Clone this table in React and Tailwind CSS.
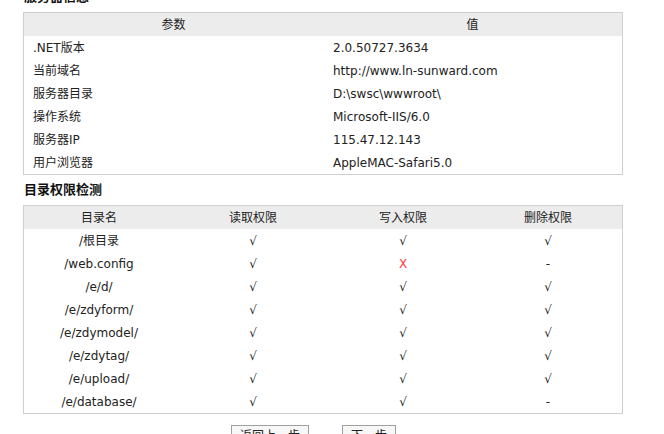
import React from "react";

const info = [
  [".NET版本", "2.0.50727.3634"],
  ["当前域名", "http://www.ln-sunward.com"],
  ["服务器目录", "D:\\swsc\\wwwroot\\"],
  ["操作系统", "Microsoft-IIS/6.0"],
  ["服务器IP", "115.47.12.143"],
  ["用户浏览器", "AppleMAC-Safari5.0"],
];

const dirs = [
  ["/根目录", "√", "√", "√"],
  ["/web.config", "√", "X", "-"],
  ["/e/d/", "√", "√", "√"],
  ["/e/zdyform/", "√", "√", "√"],
  ["/e/zdymodel/", "√", "√", "√"],
  ["/e/zdytag/", "√", "√", "√"],
  ["/e/upload/", "√", "√", "√"],
  ["/e/database/", "√", "√", "-"],
];

function Cell({ v }) {
  if (v === "X") return <span className="text-[#ff3b3b]">X</span>;
  return <span>{v}</span>;
}

export default function App() {
  return (
    <div
      className="flex flex-col w-[664px] h-[434px] overflow-hidden bg-white text-[12px] text-[#222]"
      style={{ fontFamily: '"DejaVu Sans", "Noto Sans CJK SC", sans-serif' }}
    >
      <div className="shrink-0 mt-[-18px] ml-[24px] h-[30px] flex items-center font-bold text-[13px] text-[#111]">
        服务器信息
      </div>
      <div className="shrink-0 ml-[23px] w-[600px] border border-[#cfcfcf]">
        <div className="grid grid-cols-2 h-[23px] bg-[#ececec] items-center text-center">
          <div>参数</div>
          <div>值</div>
        </div>
        {info.map(([k, v]) => (
          <div key={k} className="grid grid-cols-2 h-[23px] items-center">
            <div className="pl-[9px]">{k}</div>
            <div className="pl-[10px]">{v}</div>
          </div>
        ))}
      </div>
      <div className="shrink-0 ml-[24px] h-[30px] flex items-center font-bold text-[13px] text-[#111]">
        目录权限检测
      </div>
      <div className="shrink-0 ml-[23px] w-[600px] border border-[#cfcfcf]">
        <div className="grid grid-cols-[150px_158px_142px_148px] h-[23px] bg-[#ececec] items-center text-center">
          <div>目录名</div>
          <div>读取权限</div>
          <div>写入权限</div>
          <div>删除权限</div>
        </div>
        {dirs.map((r) => (
          <div
            key={r[0]}
            className="grid grid-cols-[150px_158px_142px_148px] h-[23px] items-center text-center"
          >
            <div>{r[0]}</div>
            <div>
              <Cell v={r[1]} />
            </div>
            <div>
              <Cell v={r[2]} />
            </div>
            <div>
              <Cell v={r[3]} />
            </div>
          </div>
        ))}
      </div>
      <div className="shrink-0 flex mt-[11px] ml-[231px] gap-[33px]">
        <button className="h-[22px] px-[8px] border border-[#a0a0a0] bg-[#f7f7f7] text-[12px] leading-none">
          返回上一步
        </button>
        <button className="h-[22px] px-[8px] border border-[#a0a0a0] bg-[#f7f7f7] text-[12px] leading-none">
          下一步
        </button>
      </div>
    </div>
  );
}
